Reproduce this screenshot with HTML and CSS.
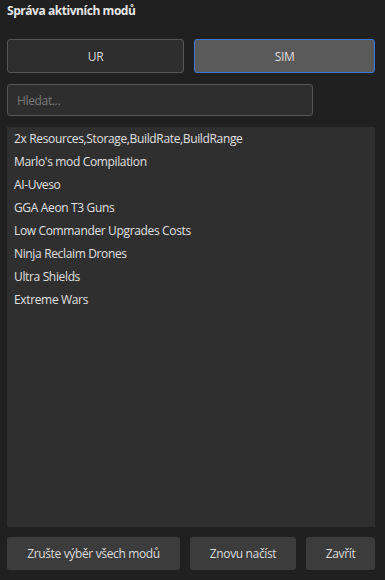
FILE: index.html
```html
<!DOCTYPE html>
<html lang="cs">
<head>
    <meta charset="UTF-8">
    <meta name="viewport" content="width=device-width, initial-scale=1.0">
    <title>Správa aktivních modů</title>
    <link rel="stylesheet" href="styles.css">
</head>
<body>
    <div class="dialog">
        <h1 class="title">Správa aktivních modů</h1>

        <!-- Mod type tabs -->
        <div class="tabs">
            <button class="tab">UR</button>
            <button class="tab active">SIM</button>
        </div>

        <input class="search" type="text" placeholder="Hledat...">

        <!-- Active mods -->
        <ul class="mod-list">
            <li>2x Resources,Storage,BuildRate,BuildRange</li>
            <li>Marlo's mod Compilation</li>
            <li>AI-Uveso</li>
            <li>GGA Aeon T3 Guns</li>
            <li>Low Commander Upgrades Costs</li>
            <li>Ninja Reclaim Drones</li>
            <li>Ultra Shields</li>
            <li>Extreme Wars</li>
        </ul>

        <div class="actions">
            <button class="btn btn-clear">Zrušte výběr všech modů</button>
            <button class="btn btn-reload">Znovu načíst</button>
            <button class="btn btn-close">Zavřít</button>
        </div>
    </div>
</body>
</html>
```

FILE: styles.css
```css
html, body {
    margin: 0;
    padding: 0;
    background-color: #202020;
}
body {
    font-family: "Open Sans", "Noto Sans", sans-serif;
    font-size: 12px;
    letter-spacing: -0.35px;
    color: #e0e0e0;
}
.dialog {
    display: flex;
    flex-direction: column;
    width: 385px;
    height: 580px;
    padding: 0 10px 0 7px;
    box-sizing: border-box;
}
.title {
    margin: 0;
    height: 39px;
    padding-top: 2px;
    box-sizing: border-box;
    font-size: 12px;
    font-weight: bold;
    letter-spacing: -0.45px;
    color: #e6e6e6;
}
.tabs {
    display: grid;
    grid-template-columns: 177px 1fr;
    gap: 10px;
}
.tab {
    height: 34px;
    background-color: #2e2e2e;
    border: 1px solid #555;
    border-radius: 3px;
    color: #dcdcdc;
    font-family: inherit;
    font-size: 12px;
    letter-spacing: inherit;
}
.tab.active {
    background-color: #5a5a5a;
    border-color: #3b78d8;
}
.search {
    width: 306px;
    height: 32px;
    margin-top: 11px;
    box-sizing: border-box;
    padding: 0 9px;
    background-color: #2e2e2e;
    border: 1px solid #555;
    border-radius: 3px;
    color: #dcdcdc;
    font-family: inherit;
    font-size: 12px;
    letter-spacing: inherit;
}
.search::placeholder {
    color: #7a7a7a;
}
.mod-list {
    list-style: none;
    margin: 11px 0 0;
    padding: 0 7px;
    height: 400px;
    box-sizing: border-box;
    background-color: #2f2f2f;
}
.mod-list li {
    height: 23px;
    line-height: 23px;
    white-space: nowrap;
}
.actions {
    display: flex;
    gap: 10px;
    margin-top: 10px;
}
.btn {
    height: 33px;
    background-color: #3c3c3c;
    border: none;
    border-radius: 3px;
    color: #dcdcdc;
    font-family: inherit;
    font-size: 12px;
    letter-spacing: inherit;
    padding: 0;
}
.btn-clear {
    width: 173px;
}
.btn-reload {
    width: 106px;
}
.btn-close {
    flex: 1;
}
```
